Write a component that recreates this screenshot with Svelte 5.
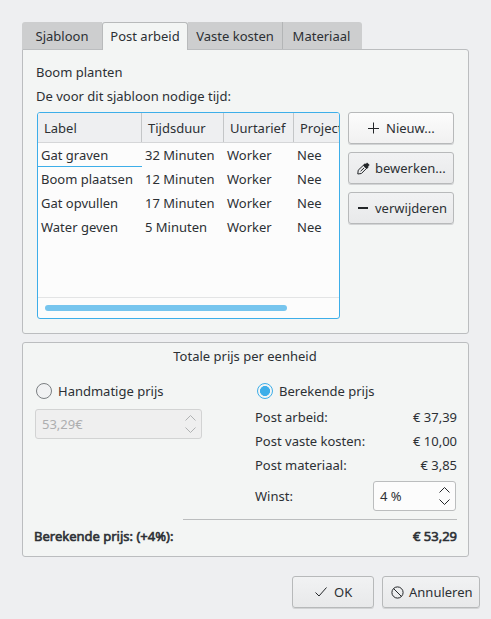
<script>
  const tabs = [
    { label: 'Sjabloon', width: 80 },
    { label: 'Post arbeid', width: 86, active: true },
    { label: 'Vaste kosten', width: 95 },
    { label: 'Materiaal', width: 79 }
  ];
  const rows = [
    ['Gat graven', '32 Minuten', 'Worker', 'Nee'],
    ['Boom plaatsen', '12 Minuten', 'Worker', 'Nee'],
    ['Gat opvullen', '17 Minuten', 'Worker', 'Nee'],
    ['Water geven', '5 Minuten', 'Worker', 'Nee']
  ];
  const costs = [
    ['Post arbeid:', '€ 37,39'],
    ['Post vaste kosten:', '€ 10,00'],
    ['Post materiaal:', '€ 3,85']
  ];
  let mode = $state('calculated');
</script>

{#snippet arrows()}
  <svg class="arrows" width="11" height="20" viewBox="0 0 11 20">
    <path d="M.5 6.500 5.500 1.500l5 5M.5 13.500l5 5 5-5" />
  </svg>
{/snippet}

<main>
  <div class="tabs">
    {#each tabs as tab}
      <div class="tab" class:active={tab.active} style="width:{tab.width}px">{tab.label}</div>
    {/each}
  </div>

  <section class="panel work">
    <div class="line">Boom planten</div>
    <div class="line">De voor dit sjabloon nodige tijd:</div>
    <div class="split">
      <div class="table">
        <div class="row head">
          <span>Label</span><span>Tijdsduur</span><span>Uurtarief</span><span>Project</span>
        </div>
        {#each rows as row, i}
          <div class="row" class:current={i === 0}>
            {#each row as cell}<span>{cell}</span>{/each}
          </div>
        {/each}
        <div class="scroll"><div class="thumb"></div></div>
      </div>
      <div class="actions">
        <button class="light">
          <svg class="plus" width="12" height="12" viewBox="0 0 12 12"><path d="M5.500 .5v11M0 6.500h11" /></svg>
          <span>Nieuw...</span>
        </button>
        <button class="edit">
          <svg width="13" height="13" viewBox="0 0 13 13">
            <path d="M.8 12 1.200 8.200 6.500 3.200 9.600 6.300 4.400 11.500zM3.600 9.200l3.600-3.400" />
            <path class="fill flat" d="M6 3.200 8 1.300l.9.6L10 .4 12.700 3l-1.600 1.200.6.8-2 2z" />
          </svg>
          <span>bewerken...</span>
        </button>
        <button class="remove">
          <svg width="10" height="2" viewBox="0 0 10 2"><path class="fill flat" d="M0 0h10v2H0z" /></svg>
          <span>verwijderen</span>
        </button>
      </div>
    </div>
  </section>

  <section class="panel price">
    <div class="title">Totale prijs per eenheid</div>
    <div class="cols">
      <div class="manual">
        <label>
          <input type="radio" bind:group={mode} value="manual" />
          Handmatige prijs
        </label>
        <div class="spin disabled"><span>53,29€</span>{@render arrows()}</div>
      </div>
      <div class="calc">
        <label>
          <input type="radio" bind:group={mode} value="calculated" />
          Berekende prijs
        </label>
        {#each costs as [name, amount]}
          <div class="cost"><span>{name}</span><span>{amount}</span></div>
        {/each}
        <div class="cost profit">
          <span>Winst:</span>
          <div class="spin small"><span>4 %</span>{@render arrows()}</div>
        </div>
      </div>
    </div>
    <div class="rule"></div>
    <div class="total"><span>Berekende prijs: (+4%):</span><span>€ 53,29</span></div>
  </section>

  <footer>
    <button class="ok">
      <svg width="12" height="10" viewBox="0 0 12 10"><path d="M.5 5.500 4 9l7.500-8.500" /></svg>
      <span>OK</span>
    </button>
    <button class="cancel">
      <svg width="13" height="13" viewBox="0 0 13 13"><circle cx="6.500" cy="6.500" r="5.600" /><path d="M2.500 2.500l8 8" /></svg>
      <span>Annuleren</span>
    </button>
  </footer>
</main>

<style>
  :global(body) { margin: 0; background: #eeeff1; }
  * { box-sizing: border-box; }
  main {
    width: 491px;
    height: 619px;
    padding: 22px 22px 0;
    background: #eeeff1;
    color: #2c3034;
    font: 13px/24px "Noto Sans", sans-serif;
    white-space: nowrap;
    overflow: hidden;
  }
  .tabs { display: flex; height: 27px; }
  .tab {
    height: 27px;
    line-height: 28px;
    text-align: center;
    background: #cdcecf;
    border-right: 1px solid #b3b5b6;
  }
  .tab:first-child { border-right: 0; border-radius: 3px 0 0 0; }
  .tab:last-child { border-right: 0; border-radius: 0 3px 0 0; padding-right: 2px; }
  .tab.active {
    position: relative;
    height: 28px;
    line-height: 27px;
    background: #f3f5f4;
    border: 1px solid #b8babb;
    border-bottom: 0;
    border-radius: 3px 3px 0 0;
  }
  .panel {
    width: 447px;
    background: #f3f5f4;
    border: 1px solid #bbbdbf;
    border-radius: 3px;
  }
  .work { height: 285px; padding: 10px 13px 0 14px; border-top-left-radius: 0; }
  .line { margin-left: -1px; }
  .split { display: flex; gap: 8px; margin-top: 4px; }
  .table {
    display: flex;
    flex-direction: column;
    width: 303px;
    height: 207px;
    border: 1px solid #3daee9;
    border-radius: 3px;
    background: #fcfcfc;
    overflow: hidden;
  }
  .row { display: grid; grid-template-columns: 104px 82px 70px 1fr; height: 24px; flex: none; }
  .row span { padding-left: 3px; overflow: hidden; }
  .row.current span:first-child { border-bottom: 1px solid #3daee9; }
  .head { height: 30px; line-height: 30px; background: #eeeff1; border-bottom: 1px solid #d5d6d8; }
  .head span { padding-left: 6px; border-right: 1px solid #c4c6c8; }
  .head span:last-child { border-right: 0; }
  .scroll { height: 21px; margin-top: auto; border-top: 1px solid #e3e4e5; padding: 7px; }
  .thumb { width: 242px; height: 6px; border-radius: 3px; background: #77c5ee; }
  .actions { display: flex; flex-direction: column; gap: 8px; }
  button {
    display: flex;
    flex: none;
    align-items: center;
    width: 106px;
    height: 32px;
    padding: 0;
    font: inherit;
    color: inherit;
    background: linear-gradient(#f1f2f3, #e8e9ea);
    border: 1px solid #b7b9ba;
    border-radius: 3px;
    box-shadow: 0 1px 0 #d2d4d5;
  }
  button.light { background: linear-gradient(#fcfcfc, #f1f1f1); padding-left: 19px; gap: 6px; }
  .edit { padding-left: 8px; gap: 5px; }
  .remove { padding-left: 9px; gap: 7px; }
  svg { flex: none; fill: none; stroke: #232629; stroke-width: 1; overflow: visible; }
  .fill { fill: #232629; }
  .flat { stroke: none; }
  .price { height: 215px; margin-top: 8px; padding: 1px 11px 0; }
  .title { text-align: center; padding-right: 1px; }
  .cols { display: flex; justify-content: space-between; }
  .manual { width: 167px; margin-left: 1px; }
  .calc { width: 202px; }
  label { display: flex; align-items: center; gap: 6px; height: 20px; margin-top: 13px; padding-left: 1px; }
  .calc label { padding-left: 2px; margin-bottom: 4px; }
  input {
    appearance: none;
    width: 16px;
    height: 16px;
    margin: 0;
    border: 1px solid #7b7f82;
    border-radius: 50%;
    background: #f1f2f3;
  }
  input:checked {
    border-color: #3daee9;
    background: radial-gradient(circle, #3daee9 4.700px, #f3f5f4 5.300px);
  }
  .spin {
    display: flex;
    align-items: center;
    justify-content: space-between;
    height: 30px;
    padding: 0 5px 0 6px;
    border: 1px solid #bbbdbe;
    border-radius: 3px;
    background: #fcfcfc;
  }
  .disabled { margin-top: 8px; color: #adaeaf; background: #efefef; border-color: #d2d3d3; }
  .disabled svg { stroke: #b0b2b3; }
  .small { width: 83px; margin-right: 1px; }
  .cost { display: flex; justify-content: space-between; height: 24px; }
  .profit { height: 30px; margin-top: 4px; line-height: 30px; }
  .rule { width: 274px; height: 1px; margin: 8px 0 0 auto; background: #bbbdbe; }
  .total { display: flex; justify-content: space-between; margin-top: 4px; -webkit-text-stroke: 0.6px #2c3034; }
  footer { display: flex; gap: 8px; margin: 19px 0 0 270px; }
  .ok { width: 82px; padding-left: 22px; gap: 7px; }
  .cancel { width: 98px; padding-left: 8px; gap: 5px; }
</style>
